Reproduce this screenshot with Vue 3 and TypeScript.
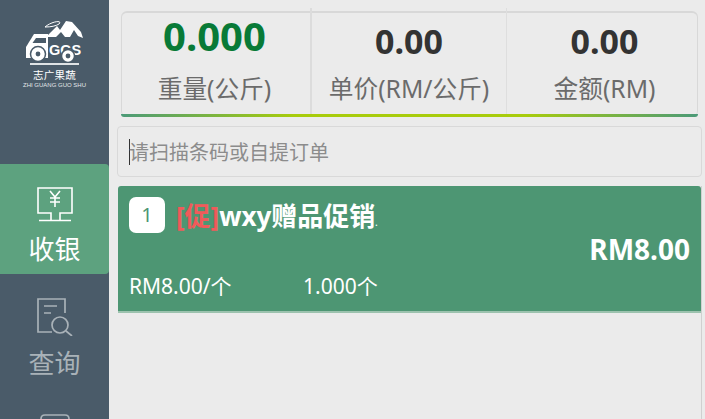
<script setup lang="ts">
interface Stat {
  value: string;
  label: string;
  green?: boolean;
}

const stats: Stat[] = [
  { value: "0.000", label: "重量(公斤)", green: true },
  { value: "0.00", label: "单价(RM/公斤)" },
  { value: "0.00", label: "金额(RM)" },
];
</script>

<template>
  <div class="pos">
    <aside class="side">
      <div class="logo">
        <svg width="60" height="43" viewBox="0 0 60 43">
          <path d="M1 38V27L9 14H23V38Z" fill="#fff" />
          <path d="M11 18H21V23H7.5Z" fill="#4a5b69" />
          <path d="M23 15L32 6L35 10L41 1L47 2L56 12L58 18L53 16L49 10L45 17H40L36 12L31 17H23Z" fill="#fff" />
          <path d="M20 7C27 1 38 0 34 4C31 6 26 7 20 7Z" fill="none" stroke="#fff" stroke-width="1" />
          <text x="24" y="35" class="logo-mark">GGS</text>
          <circle cx="13" cy="34" r="7.5" fill="#fff" stroke="#4a5b69" stroke-width="1.5" />
          <circle cx="13" cy="34" r="2.4" fill="#4a5b69" />
          <circle cx="43" cy="36" r="6.5" fill="#fff" stroke="#4a5b69" stroke-width="1.5" />
          <circle cx="43" cy="36" r="2.4" fill="#4a5b69" />
        </svg>
        <div class="logo-rule"></div>
        <div class="logo-cn">志广果蔬</div>
        <div class="logo-en">ZHI GUANG GUO SHU</div>
      </div>

      <nav class="nav">
        <div class="nav-item active">
          <svg width="38" height="36" viewBox="0 0 38 36" fill="none" stroke="#fff" stroke-width="1.6">
            <path d="M4 27H2V2H36V27H33" />
            <path d="M4 27H15V34M33 27H24V34M3 34.5H35" />
            <path d="M14 5L19 11L24 5M19 11V21M14 12H24M14 16H24" />
          </svg>
          <span>收银</span>
        </div>
        <div class="nav-item">
          <svg width="38" height="38" viewBox="0 0 38 38" fill="none" stroke="#a9b2b8" stroke-width="1.7">
            <path d="M16 34H2V1H29V15" />
            <path d="M8 8H21M8 15H15" />
            <circle cx="24" cy="27" r="8" />
            <path d="M30 33L36 38" />
          </svg>
          <span>查询</span>
        </div>
        <div class="nav-item">
          <svg width="38" height="38" viewBox="0 0 38 38" fill="none" stroke="#a9b2b8" stroke-width="1.7">
            <path d="M5 14V5Q5 1 9 1H29Q33 1 33 5V14" />
          </svg>
        </div>
      </nav>
    </aside>

    <main class="main">
      <section class="stats">
        <div v-for="s in stats" :key="s.label" class="stat">
          <div class="stat-value" :class="{ green: s.green }">{{ s.value }}</div>
          <div class="stat-label">{{ s.label }}</div>
        </div>
      </section>

      <div class="search">
        <i class="caret"></i>
        <span>请扫描条码或自提订单</span>
      </div>

      <section class="list">
        <article class="row">
          <div class="row-top">
            <span class="num">1</span>
            <span class="name"><em>[促]</em>wxy赠品促销<small>.</small></span>
          </div>
          <div class="row-total">RM8.00</div>
          <div class="row-meta">
            <span class="unit">RM8.00/个</span>
            <span>1.000个</span>
          </div>
        </article>
      </section>
    </main>
  </div>
</template>

<style>
html,
body {
  margin: 0;
  overflow: hidden;
}
</style>

<style scoped>
.pos {
  display: flex;
  width: 705px;
  height: 419px;
  overflow: hidden;
  background: #ebebeb;
  font-family: "Noto Sans", "Noto Sans CJK SC", sans-serif;
}

.side {
  width: 109px;
  flex: none;
  background: #4a5b69;
  color: #fff;
}

.logo {
  display: flex;
  flex-direction: column;
  align-items: center;
  padding-top: 20px;
  height: 164px;
  box-sizing: border-box;
}

.logo svg {
  display: block;
  margin-left: 1px;
}

.logo-mark {
  font: 700 14.5px "Liberation Sans", sans-serif;
  fill: #fff;
}

.logo-rule {
  width: 49px;
  height: 2px;
  background: #dfe3e5;
}

.logo-cn {
  margin-top: 5px;
  font-size: 10.5px;
  line-height: 11px;
  letter-spacing: 0.3px;
}

.logo-en {
  font: 6px/9px "Liberation Sans", sans-serif;
  white-space: nowrap;
  color: #e4e7e9;
}

.nav-item {
  display: flex;
  flex-direction: column;
  align-items: center;
  height: 110px;
  padding-top: 22px;
  box-sizing: border-box;
  color: #a9b2b8;
  font-size: 26px;
  line-height: 34px;
}

.nav-item span {
  margin-top: 10px;
}

.nav-item + .nav-item {
  padding-top: 24px;
}

.nav-item:last-child {
  padding-top: 30px;
}

.active {
  background: #5da27f;
  border-radius: 0 4px 4px 0;
  color: #fff;
}

.main {
  flex: 1;
  display: flex;
  flex-direction: column;
  padding: 11px 3px 0 8px;
}

.stats {
  display: flex;
  margin: 0 4px;
  height: 106px;
  box-sizing: border-box;
  border: 1px solid #d8d8d8;
  border-top-width: 2px;
  border-bottom: 0;
  border-radius: 6px;
  position: relative;
  background: #ebebeb;
}

.stats::after {
  content: "";
  position: absolute;
  left: -1px;
  right: -1px;
  bottom: 0;
  height: 3px;
  border-radius: 0 0 6px 6px;
  background: linear-gradient(90deg, #4b9a78, #a8cc0c 30%, #a8cc0c 70%, #4b9a78);
}

.stat {
  flex: 1;
  text-align: center;
  margin-top: -5px;
  padding-top: 3px;
}

.stat:first-child {
  flex: 0 0 190px;
  padding-right: 3px;
  box-sizing: border-box;
  border-right: 2px solid #dcdcdc;
}

.stat:last-child {
  flex: 0 0 191px;
  box-sizing: border-box;
  padding-left: 5px;
  border-left: 1px solid #dedede;
}

.stat-value {
  margin-top: 9px;
  height: 42px;
  font-size: 34px;
  line-height: 42px;
  font-weight: 700;
  color: #333;
}

.stat-value.green {
  margin-top: 0;
  height: 51px;
  font-size: 40px;
  line-height: 50px;
  color: #087a37;
}

.stat-label {
  margin-top: 10px;
  font-size: 24.7px;
  line-height: 34px;
  color: #6b6b6b;
}

.search {
  display: flex;
  align-items: center;
  height: 51px;
  margin-top: 9px;
  padding-left: 11px;
  box-sizing: border-box;
  border: 1px solid #d9d9d9;
  border-radius: 4px;
  font-size: 20px;
  color: #8c8c8c;
}

.caret {
  width: 1px;
  height: 26px;
  background: #333;
  margin-right: -1px;
}

.list {
  flex: 1;
  margin-top: 9px;
  margin-left: 1px;
  border-right: 1px solid #d0d0d0;
}

.row {
  height: 127px;
  box-sizing: border-box;
  padding: 11px 11px 0;
  background: #4d9673;
  border-bottom: 2px solid #9cc2ae;
  border-radius: 3px 3px 0 0;
  color: #fff;
}

.row-top {
  display: flex;
  align-items: flex-start;
  gap: 13px;
  height: 36px;
}

.num {
  width: 36px;
  height: 36px;
  border-radius: 7px;
  background: #fff;
  color: #4d9673;
  font-size: 20px;
  line-height: 36px;
  text-align: center;
}

.name {
  margin-top: 1px;
  margin-left: -2px;
  font-size: 26px;
  line-height: 36px;
  font-weight: 700;
  white-space: nowrap;
}

.name em {
  font-style: normal;
  color: #f05a5a;
}

.name small {
  font-size: 8px;
}

.row-total {
  margin-top: 1px;
  text-align: right;
  font-size: 28px;
  line-height: 30px;
  font-weight: 700;
}

.row-meta {
  display: flex;
  margin-top: 8px;
  font-size: 21px;
  line-height: 28px;
}

.unit {
  width: 174px;
}
</style>
